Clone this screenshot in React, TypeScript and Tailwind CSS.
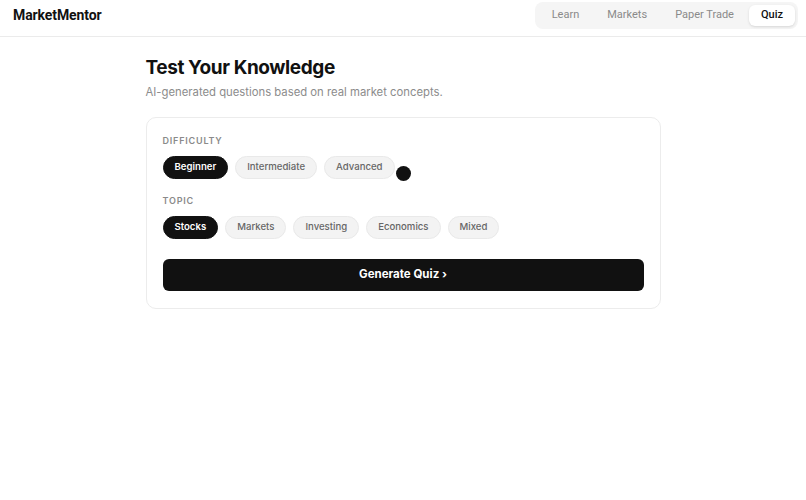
import React, { useState } from 'react';

const difficulties = ['Beginner', 'Intermediate', 'Advanced'];
const topics = ['Stocks', 'Markets', 'Investing', 'Economics', 'Mixed'];
const tabs = ['Learn', 'Markets', 'Paper Trade', 'Quiz'];

const Pill: React.FC<{ label: string; active: boolean; onClick: () => void }> = ({ label, active, onClick }) => (
  <button
    onClick={onClick}
    className={`h-[23px] px-[11px] rounded-full text-[9.6px] font-medium border ${
      active ? 'bg-[#111111] border-[#111111] text-white font-semibold' : 'bg-[#f3f3f3] border-[#e9e9e9] text-[#666666]'
    }`}
  >
    {label}
  </button>
);

const App: React.FC = () => {
  const [difficulty, setDifficulty] = useState('Beginner');
  const [topic, setTopic] = useState('Stocks');

  return (
    <div className="min-h-screen bg-white text-[#111111]" style={{ fontFamily: 'Inter, "Noto Sans", sans-serif' }}>
      <header className="h-[37px] border-b border-[#ebebeb] flex items-start justify-between pl-[13px] pr-[8px]">
        <span
          className="text-[14px] font-bold leading-[30px] tracking-[-0.1px]"
          style={{ fontFamily: 'Roboto, "Liberation Sans", sans-serif' }}
        >
          MarketMentor
        </span>
        <nav
          className="mt-[2px] flex items-center bg-[#f5f5f5] rounded-[8px] p-[3px] text-[11px]"
          style={{ fontFamily: 'Roboto, "Liberation Sans", sans-serif' }}
        >
          {tabs.map(t => (
            <span
              key={t}
              className={`h-[21px] flex items-center rounded-[6px] ${
                t === 'Quiz' ? 'ml-[1px] bg-white text-[#111111] shadow-sm px-[12px] font-medium' : 'text-[#8a8a8a] px-[14px]'
              }`}
            >
              {t}
            </span>
          ))}
        </nav>
      </header>

      <main className="w-[515px] mx-auto pt-[18px]">
        <h1 className="text-[19px] font-bold tracking-[-0.4px] leading-[25px]">Test Your Knowledge</h1>
        <p className="text-[11.3px] text-[#8c8c8c] mt-[4px]">AI-generated questions based on real market concepts.</p>

        <div className="mt-[16px] border border-[#ececec] rounded-[10px] px-[16px] pt-[17px] pb-[17px]">
          <div className="text-[9px] leading-[12px] font-semibold tracking-[0.8px] text-[#8a8a8a] uppercase">Difficulty</div>
          <div className="relative flex gap-[7px] mt-[9px]">
            {difficulties.map(d => (
              <Pill key={d} label={d} active={difficulty === d} onClick={() => setDifficulty(d)} />
            ))}
            <span className="absolute left-[233px] top-[10px] w-[15px] h-[15px] rounded-full bg-[#111111]" />
          </div>

          <div className="text-[9px] leading-[12px] font-semibold tracking-[0.8px] text-[#8a8a8a] uppercase mt-[16px]">Topic</div>
          <div className="flex gap-[7px] mt-[9px]">
            {topics.map(t => (
              <Pill key={t} label={t} active={topic === t} onClick={() => setTopic(t)} />
            ))}
          </div>

          <button className="mt-[20px] w-full h-[32px] rounded-[6px] bg-[#111111] text-white text-[11.5px] font-bold">
            Generate Quiz ›
          </button>
        </div>
      </main>
    </div>
  );
};

export default App;
